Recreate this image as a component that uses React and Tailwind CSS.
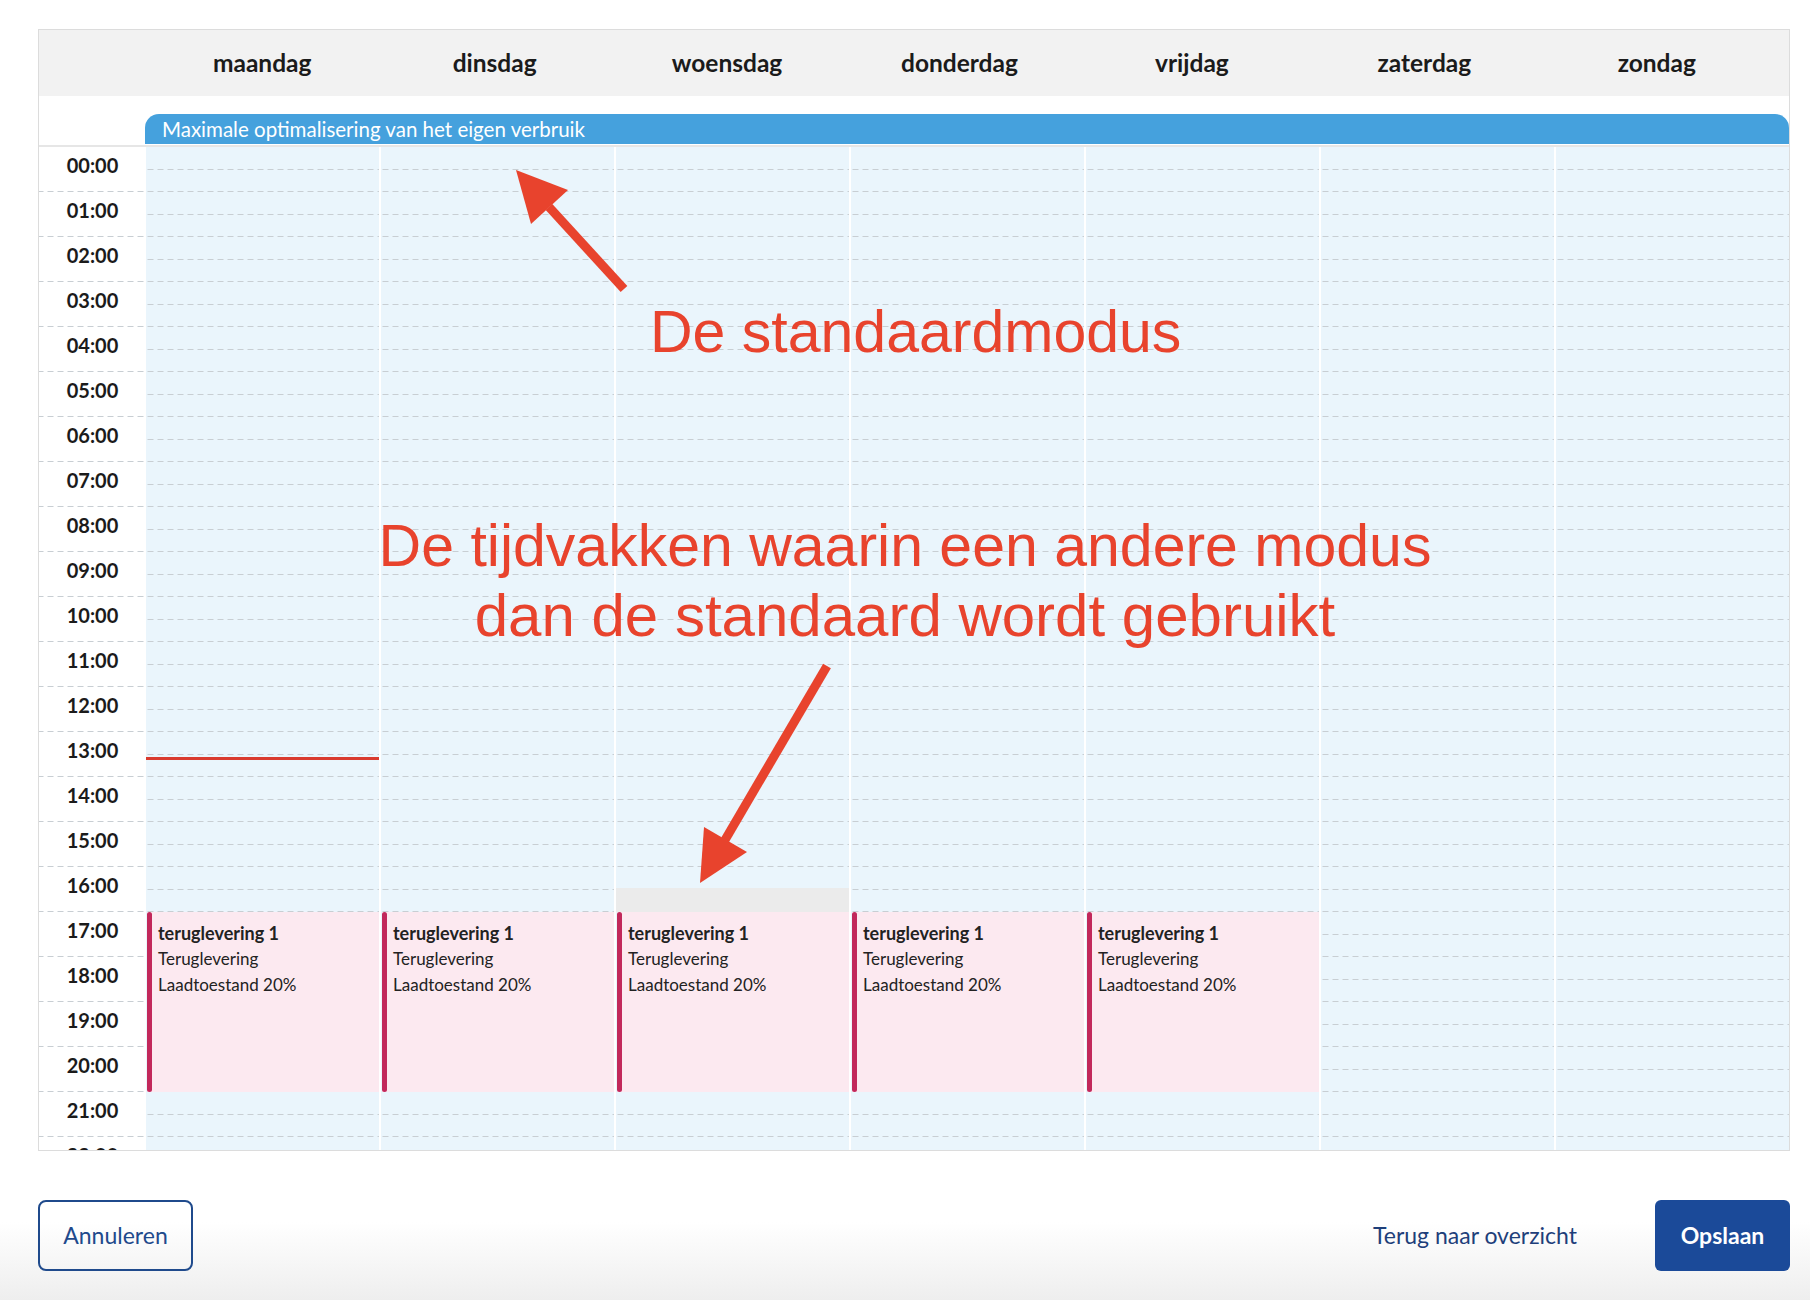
const days = ['maandag', 'dinsdag', 'woensdag', 'donderdag', 'vrijdag', 'zaterdag', 'zondag']
const hours = Array.from({ length: 23 }, (_, i) => `${String(i).padStart(2, '0')}:00`)

// dashed line under every grid cell
const dash = 'bg-[linear-gradient(to_right,#c8ced3_60%,transparent_60%)] bg-[length:10px_1px] bg-repeat-x bg-bottom'

function Event() {
  return (
    <div className="absolute left-[1px] right-0 top-[765px] h-[180px] flex bg-[#fce9f0]">
      <div className="w-[5px] shrink-0 rounded-full bg-[#c2285b]" />
      <div className="pl-[6px] pt-[8px] text-[17px] leading-[26px] text-[#222]">
        <div className="text-[18px] font-bold">teruglevering 1</div>
        <div>Teruglevering</div>
        <div>Laadtoestand 20%</div>
      </div>
    </div>
  )
}

function DayColumn({ index }) {
  return (
    <div className="relative flex-1 bg-[#eaf5fc]">
      {hours.map((h) => (
        <div key={h} className="h-[45px]">
          <div className={`h-[22.5px] ${dash}`} />
          <div className={`h-[22.5px] ${dash}`} />
        </div>
      ))}
      {index === 0 && <div className="absolute left-0 right-0 top-[610px] h-[3px] bg-[#d93a2e]" />}
      {index === 2 && <div className="absolute left-0 right-0 top-[741px] h-[24px] bg-[#ebebeb]" />}
      {index < 5 && <Event />}
    </div>
  )
}

export default function App() {
  return (
    <div className="relative h-[1300px] overflow-hidden bg-[linear-gradient(to_bottom,#ffffff_94%,#eeeeee)] pt-[29px] pl-[38px] pr-[20px] font-[Lato,sans-serif] text-[#1b1b1b]">
      {/* Week table */}
      <div className="border border-[#dcdcdc]">
        <div className="flex h-[66px] bg-[#f2f2f2] pr-[16px]">
          <div className="w-[107px] shrink-0" />
          <div className="flex flex-1">
            {days.map((d) => (
              <div key={d} className="flex flex-1 items-center justify-center text-[24.5px] font-bold">
                {d}
              </div>
            ))}
          </div>
        </div>

        <div className="flex h-[51px] border-b-2 border-[#e6e6e6]">
          <div className="w-[106px] shrink-0" />
          <div className="flex-1 pt-[18px]">
            <div className="h-[30px] rounded-t-[14px] bg-[#45a1dd] pl-[17px] text-[20.5px] leading-[30px] text-white">
              Maximale optimalisering van het eigen verbruik
            </div>
          </div>
        </div>

        <div className="flex h-[1003px] overflow-hidden">
          <div className="w-[107px] shrink-0 bg-white">
            {hours.map((h) => (
              <div key={h} className={`flex h-[45px] justify-center pt-[6px] text-[20px] font-bold leading-[24px] ${dash}`}>
                {h}
              </div>
            ))}
          </div>
          <div className="flex flex-1 gap-[2px] bg-white">
            {days.map((d, i) => (
              <DayColumn key={d} index={i} />
            ))}
          </div>
        </div>
      </div>

      {/* Footer buttons */}
      <div className="mt-[49px] flex items-center justify-between">
        <button className="h-[71px] w-[155px] rounded-[8px] border-2 border-[#1f4a8c] text-[23px] text-[#1f4a8c]">
          Annuleren
        </button>
        <div className="flex items-center gap-[78px]">
          <span className="text-[23px] text-[#1e3f7a]">Terug naar overzicht</span>
          <button className="h-[71px] w-[135px] rounded-[6px] bg-[#1b4a99] text-[23px] font-bold text-white">
            Opslaan
          </button>
        </div>
      </div>

      {/* Annotations */}
      <svg className="pointer-events-none absolute left-0 top-0" width="1810" height="1300">
        <line x1="624" y1="289" x2="549" y2="207" stroke="#e8432d" strokeWidth="9" />
        <polygon points="516,170 568,190 531,224" fill="#e8432d" />
        <line x1="827" y1="666" x2="725" y2="840" stroke="#e8432d" strokeWidth="9" />
        <polygon points="700,883 747,852 704,827" fill="#e8432d" />
      </svg>
      <div className="absolute left-[650px] top-[302px] whitespace-nowrap text-[59px] leading-[60px] text-[#e8432d] font-['Liberation_Sans',Arial,sans-serif]">
        De standaardmodus
      </div>
      <div className="absolute left-[305px] top-[511px] w-[1200px] whitespace-nowrap text-center text-[59px] leading-[70px] text-[#e8432d] font-['Liberation_Sans',Arial,sans-serif]">
        De tijdvakken waarin een andere modus
        <br />
        <span className="text-[60px]">dan de standaard wordt gebruikt</span>
      </div>
    </div>
  )
}
